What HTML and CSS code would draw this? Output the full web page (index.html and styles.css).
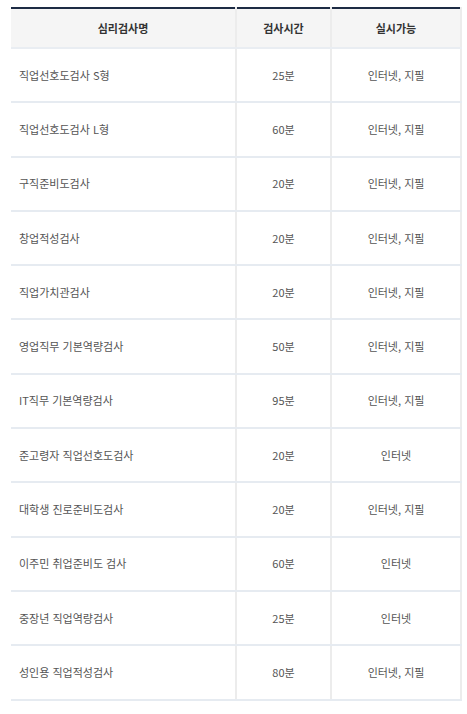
FILE: index.html
```html
<!DOCTYPE html>
<html lang="ko">
<head>
<meta charset="utf-8">
<link rel="stylesheet" href="styles.css">
</head>
<body>
<table class="tests">
  <colgroup>
    <col class="c-name">
    <col class="c-time">
    <col class="c-mode">
  </colgroup>
  <thead>
    <tr><th>심리검사명</th><th>검사시간</th><th>실시가능</th></tr>
  </thead>
  <tbody>
    <tr><td class="name">직업선호도검사 S형</td><td>25분</td><td>인터넷, 지필</td></tr>
    <tr><td class="name">직업선호도검사 L형</td><td>60분</td><td>인터넷, 지필</td></tr>
    <tr><td class="name">구직준비도검사</td><td>20분</td><td>인터넷, 지필</td></tr>
    <tr><td class="name">창업적성검사</td><td>20분</td><td>인터넷, 지필</td></tr>
    <tr><td class="name">직업가치관검사</td><td>20분</td><td>인터넷, 지필</td></tr>
    <tr><td class="name">영업직무 기본역량검사</td><td>50분</td><td>인터넷, 지필</td></tr>
    <tr><td class="name">IT직무 기본역량검사</td><td>95분</td><td>인터넷, 지필</td></tr>
    <tr><td class="name">준고령자 직업선호도검사</td><td>20분</td><td>인터넷</td></tr>
    <tr><td class="name">대학생 진로준비도검사</td><td>20분</td><td>인터넷, 지필</td></tr>
    <tr><td class="name">이주민 취업준비도 검사</td><td>60분</td><td>인터넷</td></tr>
    <tr><td class="name">중장년 직업역량검사</td><td>25분</td><td>인터넷</td></tr>
    <tr><td class="name">성인용 직업적성검사</td><td>80분</td><td>인터넷, 지필</td></tr>
  </tbody>
</table>
</body>
</html>
```
FILE: styles.css
```css
html, body {
  margin: 0;
  padding: 0;
  background: #ffffff;
}
body {
  padding: 7px 0 0 11px;
  font-family: "Noto Sans CJK KR", "Noto Sans", sans-serif;
}
.tests {
  border-collapse: collapse;
  table-layout: fixed;
  width: 450px;
  border-top: 2px solid #1d2b44;
  font-size: 11px;
}
.c-name { width: 225px; }
.c-time { width: 95px; }
.c-mode { width: 130px; }
.tests th {
  height: 38px;
  padding: 0;
  background: #f5f5f5;
  color: #333333;
  font-weight: 700;
  text-align: center;
  border-right: 2px solid #ececec;
  border-bottom: 2px solid #e9edf2;
  line-height: 1;
}
.tests td {
  height: 52.3px;
  padding: 0;
  color: #555555;
  text-align: center;
  border-right: 2px solid #ececec;
  border-bottom: 2px solid #e6ebf1;
  line-height: 1;
}
.tests td.name {
  text-align: left;
  padding-left: 8px;
}
```
